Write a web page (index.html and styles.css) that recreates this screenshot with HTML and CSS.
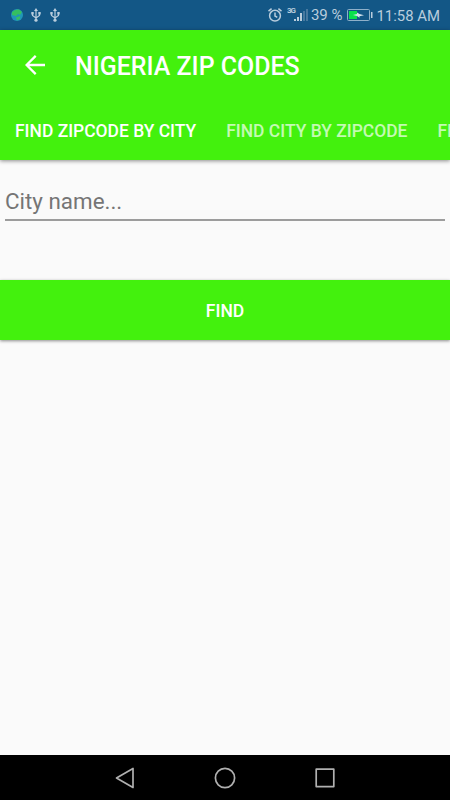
FILE: index.html
```html
<!DOCTYPE html>
<html lang="en">
<head>
    <meta charset="UTF-8">
    <meta name="viewport" content="width=device-width, initial-scale=1.0">
    <title>Nigeria Zip Codes</title>
    <link rel="stylesheet" href="styles.css">
</head>
<body>
    <div class="status-bar">
        <svg class="globe" width="12" height="12" viewBox="0 0 12 12">
            <circle cx="6" cy="6" r="6" fill="#2196b8"/>
            <path d="M1 3 Q4 0 8 0.6 L11 3 L9 6 L7 5 L5 7 L1 6Z M5 8.5 L9 7 L9 10 L6 11.5Z" fill="#35c060"/>
        </svg>
        <svg class="usb" width="10" height="14" viewBox="0 0 10 14" fill="none" stroke="#b9cddd">
            <path d="M5 2V12M1.5 5V7.5L5 10M8.5 5V7.5L5 10" stroke-width="1.2"/>
            <path d="M5 0L7 3H3Z M0.3 4h2.4v2.4h-2.4z M7.3 4h2.4v2.4h-2.4z" fill="#b9cddd" stroke="none"/>
            <circle cx="5" cy="12.2" r="1.6" fill="#b9cddd" stroke="none"/>
        </svg>
        <svg class="usb" width="10" height="14" viewBox="0 0 10 14" fill="none" stroke="#b9cddd">
            <path d="M5 2V12M1.5 5V7.5L5 10M8.5 5V7.5L5 10" stroke-width="1.2"/>
            <path d="M5 0L7 3H3Z M0.3 4h2.4v2.4h-2.4z M7.3 4h2.4v2.4h-2.4z" fill="#b9cddd" stroke="none"/>
            <circle cx="5" cy="12.2" r="1.6" fill="#b9cddd" stroke="none"/>
        </svg>
        <div class="status-right">
            <svg class="alarm" width="14" height="14" viewBox="0 0 14 14" fill="none" stroke="#b9cddd" stroke-width="1.5">
                <circle cx="7" cy="7.7" r="5.4"/>
                <path d="M7 4.5V8L9.3 9.3M0.5 3.2L3.6 0.7M13.5 3.2L10.4 0.7"/>
            </svg>
            <span class="network">3G</span>
            <svg class="signal" width="14" height="14" viewBox="0 0 14 14">
                <path d="M0 11h2v2H0z M3 9h2v4H3z M6 5h2v8H6z" fill="#b9cddd"/>
                <path d="M9 3h2v10H9z M12 1h2v12h-2z" fill="#47799f"/>
            </svg>
            <span class="percent">39 %</span>
            <svg class="battery" width="26" height="12" viewBox="0 0 26 12">
                <rect x="0.5" y="0.5" width="22" height="11" rx="1" fill="none" stroke="#8fb0c9"/>
                <path d="M24 3h1.5v6H24z" fill="#b9cddd"/>
                <rect x="2" y="2" width="8" height="8" fill="#0be04c"/>
                <path d="M6 6L10 5V3.5L12.5 5L17 6.2L12.5 7.2V8.8L10 7Z" fill="#d5e3ec"/>
            </svg>
            <span class="clock">11:58 AM</span>
        </div>
    </div>

    <header class="app-bar">
        <div class="toolbar">
            <svg class="back" width="20" height="20" viewBox="0 0 20 20" fill="none" stroke="#fff" stroke-width="2.3">
                <path d="M20 10H2M10.7 0.9L1.6 10L10.7 19.1"/>
            </svg>
            <h1>NIGERIA ZIP CODES</h1>
        </div>
        <nav class="tabs">
            <a class="tab active">FIND ZIPCODE BY CITY</a>
            <a class="tab">FIND CITY BY ZIPCODE</a>
            <a class="tab">FIND NEARBY</a>
        </nav>
    </header>

    <main class="content">
        <input class="city" type="text" placeholder="City name...">
        <button class="find" type="button">FIND</button>
    </main>

    <footer class="nav-bar">
        <svg width="20" height="22" viewBox="0 0 20 22" fill="none" stroke="#b0b0b0" stroke-width="1.7" stroke-linejoin="round">
            <path d="M18 1.5V20.5L1.5 11Z"/>
        </svg>
        <svg width="22" height="22" viewBox="0 0 22 22" fill="none" stroke="#b0b0b0" stroke-width="1.7">
            <circle cx="11" cy="11" r="9.6"/>
        </svg>
        <svg width="20" height="20" viewBox="0 0 20 20" fill="none" stroke="#b0b0b0" stroke-width="1.7" stroke-linejoin="round">
            <rect x="1.2" y="1.2" width="17.6" height="17.4"/>
        </svg>
    </footer>
</body>
</html>
```

FILE: styles.css
```css
* {
    box-sizing: border-box;
}
body {
    margin: 0;
    height: 100vh;
    display: flex;
    flex-direction: column;
    overflow: hidden;
    background-color: #fafafa;
    font-family: Roboto, sans-serif;
}
.status-bar {
    height: 30px;
    flex: none;
    display: flex;
    align-items: center;
    padding: 0 10px 0 11px;
    background-color: #135786;
    color: #b9cddd;
}
.usb {
    margin-left: 8px;
}
.usb + .usb {
    margin-left: 9px;
}
.status-right {
    display: flex;
    align-items: center;
    margin-left: auto;
}
.network {
    margin: 0 0 8px 5px;
    width: 7px;
    font-size: 8px;
    font-weight: 700;
    line-height: 8px;
    letter-spacing: -1px;
}
.percent {
    margin: 0 4px 0 3px;
    font-size: 15px;
}
.clock {
    margin-left: 4px;
    font-size: 14.9px;
    padding-top: 2px;
}
.app-bar {
    height: 130px;
    flex: none;
    background-color: #43f10d;
    box-shadow: 0 1px 4px rgba(0, 0, 0, 0.45);
    color: #fff;
}
.toolbar {
    height: 70px;
    display: flex;
    align-items: center;
    padding-left: 25px;
}
.toolbar h1 {
    margin: 2px 0 0 30px;
    font-size: 24.95px;
    font-weight: 500;
}
.tabs {
    height: 60px;
    display: flex;
    align-items: center;
    overflow: hidden;
}
.tab {
    flex: none;
    padding: 2px 15px 0;
    font-size: 17.44px;
    font-weight: 500;
    color: rgba(255, 255, 255, 0.7);
}
.tab.active {
    color: #fff;
}
.content {
    flex: 1;
}
.city {
    display: block;
    width: 440px;
    height: 41px;
    margin: 20px 5px 0;
    padding: 3px 0 0;
    border: none;
    border-bottom: 2px solid #9c9c9c;
    outline: none;
    background: none;
    font-family: inherit;
    font-size: 22.4px;
}
.city::placeholder {
    color: #757575;
}
.find {
    display: block;
    width: 100%;
    height: 60px;
    margin-top: 59px;
    padding: 2px 0 0;
    border: none;
    background-color: #43f10d;
    box-shadow: 0 1px 3px rgba(0, 0, 0, 0.45);
    color: #fff;
    font-family: inherit;
    font-size: 17.5px;
    font-weight: 500;
}
.nav-bar {
    height: 45px;
    flex: none;
    display: flex;
    align-items: center;
    justify-content: center;
    gap: 79px;
    background-color: #000;
}
```
